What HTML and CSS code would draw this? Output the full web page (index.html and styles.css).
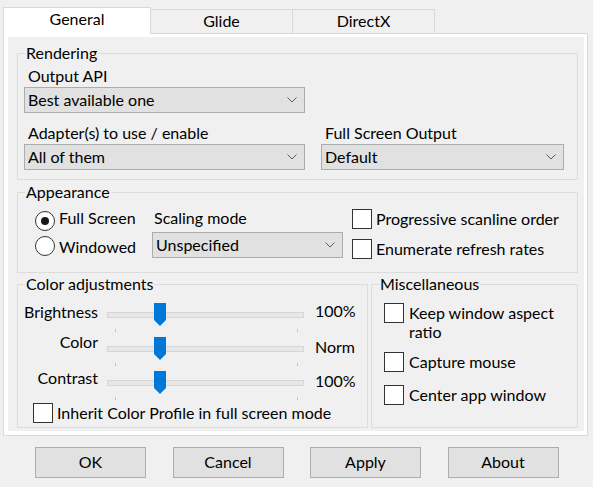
FILE: index.html
```html
<!DOCTYPE html>
<html>
<head>
<meta charset="utf-8">
<title>dgVoodoo Setup</title>
<link rel="stylesheet" href="styles.css">
</head>
<body>
<div class="tabs">
  <div class="tab tab-active">General</div>
  <div class="tab">Glide</div>
  <div class="tab">DirectX</div>
</div>
<div class="panel">
  <div class="page">
    <fieldset class="group group-rendering">
      <legend>Rendering</legend>
      <div class="label">Output API</div>
      <div class="combo combo-api"><span>Best available one</span><svg class="chev" width="10" height="6" viewBox="0 0 10 6"><path d="M0.5 0.5 L5 5 L9.5 0.5" fill="none" stroke="#5c5c5c" stroke-width="1"/></svg></div>
      <div class="render-row">
        <div class="render-col render-col-left">
          <div class="label">Adapter(s) to use / enable</div>
          <div class="combo"><span>All of them</span><svg class="chev" width="10" height="6" viewBox="0 0 10 6"><path d="M0.5 0.5 L5 5 L9.5 0.5" fill="none" stroke="#5c5c5c" stroke-width="1"/></svg></div>
        </div>
        <div class="render-col render-col-right">
          <div class="label">Full Screen Output</div>
          <div class="combo"><span>Default</span><svg class="chev" width="10" height="6" viewBox="0 0 10 6"><path d="M0.5 0.5 L5 5 L9.5 0.5" fill="none" stroke="#5c5c5c" stroke-width="1"/></svg></div>
        </div>
      </div>
    </fieldset>

    <fieldset class="group group-appearance">
      <legend>Appearance</legend>
      <div class="appearance-body">
        <div class="radios">
          <div class="radio radio-a"><span class="radio-dot checked"></span><span>Full Screen</span></div>
          <div class="radio radio-b"><span class="radio-dot"></span><span>Windowed</span></div>
        </div>
        <div class="scaling">
          <div class="scaling-label">Scaling mode</div>
          <div class="combo combo-scaling"><span>Unspecified</span><svg class="chev" width="10" height="6" viewBox="0 0 10 6"><path d="M0.5 0.5 L5 5 L9.5 0.5" fill="none" stroke="#5c5c5c" stroke-width="1"/></svg></div>
        </div>
        <div class="checks">
          <div class="check"><span class="box"></span><span>Progressive scanline order</span></div>
          <div class="check check-second"><span class="box"></span><span>Enumerate refresh rates</span></div>
        </div>
      </div>
    </fieldset>

    <div class="bottom-row">
      <fieldset class="group group-color">
        <legend>Color adjustments</legend>
        <div class="slider-row">
          <div class="s-label s-label-1">Brightness</div>
          <div class="slider">
            <div class="track"></div>
            <svg class="thumb" style="left:47px" width="12" height="23" viewBox="0 0 12 23"><path d="M0 0 H12 V17 L6 23 L0 17 Z" fill="#0078d7"/></svg>
            <span class="tick tick-l"></span><span class="tick tick-r"></span>
          </div>
          <div class="s-value s-value-1">100%</div>
        </div>
        <div class="slider-row">
          <div class="s-label s-label-2">Color</div>
          <div class="slider">
            <div class="track"></div>
            <svg class="thumb" style="left:47px" width="12" height="23" viewBox="0 0 12 23"><path d="M0 0 H12 V17 L6 23 L0 17 Z" fill="#0078d7"/></svg>
            <span class="tick tick-l"></span><span class="tick tick-r"></span>
          </div>
          <div class="s-value s-value-2">Norm</div>
        </div>
        <div class="slider-row">
          <div class="s-label s-label-3">Contrast</div>
          <div class="slider">
            <div class="track"></div>
            <svg class="thumb" style="left:47px" width="12" height="23" viewBox="0 0 12 23"><path d="M0 0 H12 V17 L6 23 L0 17 Z" fill="#0078d7"/></svg>
            <span class="tick tick-l"></span><span class="tick tick-r"></span>
          </div>
          <div class="s-value s-value-3">100%</div>
        </div>
        <div class="check check-inherit"><span class="box"></span><span>Inherit Color Profile in full screen mode</span></div>
      </fieldset>

      <fieldset class="group group-misc">
        <legend>Miscellaneous</legend>
        <div class="check mcheck mcheck-1"><span class="box"></span><span class="mtext">Keep window aspect ratio</span></div>
        <div class="check mcheck mcheck-2"><span class="box"></span><span class="mtext">Capture mouse</span></div>
        <div class="check mcheck mcheck-3"><span class="box"></span><span class="mtext">Center app window</span></div>
      </fieldset>
    </div>
  </div>
</div>
<div class="buttons">
  <div class="btn">OK</div>
  <div class="btn">Cancel</div>
  <div class="btn">Apply</div>
  <div class="btn">About</div>
</div>
</body>
</html>
```

FILE: styles.css
```css
* { box-sizing: border-box; }
html, body { margin: 0; padding: 0; }
body {
  width: 593px;
  height: 487px;
  overflow: hidden;
  background: #f0f0f0;
  font-family: Lato, "Liberation Sans", sans-serif;
  font-size: 16px;
  line-height: 20px;
  color: #000;
}

/* tabs */
.tabs {
  display: flex;
  align-items: flex-end;
  height: 33px;
  padding: 7px 0 0 3px;
}
.tab {
  width: 142px;
  height: 24px;
  padding-top: 1px;
  text-align: center;
  background: #f0f0f0;
  border: 1px solid #d9d9d9;
  border-left: none;
  border-bottom: none;
}
.tab-active {
  position: relative;
  z-index: 1;
  width: 148px;
  height: 27px;
  margin-bottom: -1px;
  background: #fff;
  border-left: 1px solid #d9d9d9;
}

/* panel */
.panel {
  margin: 0 5px 0 3px;
  border: 1px solid #d9d9d9;
  background: #fff;
  padding: 3px 3px 4px 4px;
}
.page {
  height: 394px;
  background: #f0f0f0;
  padding: 6px 6px 3px 9px;
  display: flex;
  flex-direction: column;
}

/* group boxes */
.group {
  margin: 0;
  min-width: 0;
  border: 1px solid #dcdcdc;
  padding: 0;
}
.group legend {
  margin-left: 7px;
  padding: 0 1px;
  line-height: 20px;
}

/* rendering */
.group-rendering { padding: 3px 0 9px 0; }
.label { padding-left: 10px; }
.combo {
  display: flex;
  align-items: center;
  justify-content: space-between;
  height: 26px;
  margin-top: 1px;
  padding: 0 7px 0 3px;
  background: #e1e1e1;
  border: 1px solid #adadad;
}
.chev { flex: none; }
.combo-api { width: 281px; margin-left: 6px; }
.render-row {
  display: flex;
  gap: 16px;
  margin-top: 10px;
  margin-left: 6px;
}
.render-row .label { padding-left: 4px; }
.render-col-left { width: 281px; }
.render-col-right { width: 243px; }

/* appearance */
.group-appearance { margin-top: 2px; padding: 0 0 13px 0; }
.appearance-body {
  display: flex;
  margin-left: 17px;
  padding-top: 6px;
}
.radios { width: 117px; }
.radio {
  display: flex;
  align-items: flex-start;
  gap: 4px;
  height: 20px;
}
.radio-dot {
  flex: none;
  width: 20px;
  height: 20px;
  border: 1px solid #333;
  border-radius: 50%;
  background: #fff;
  display: flex;
  align-items: center;
  justify-content: center;
}
.radio-a .radio-dot { margin-top: 3px; }
.radio-b { margin-top: 9px; }
.radio-b .radio-dot { margin-top: -1px; }
.radio-dot.checked::after {
  content: "";
  width: 8px;
  height: 8px;
  border-radius: 50%;
  background: #1a1a1a;
}
.scaling { width: 191px; }
.scaling-label { padding-left: 2px; }
.combo-scaling { margin-top: 4px; }
.checks { margin-left: 9px; padding-top: 1px; }
.check {
  display: flex;
  align-items: flex-start;
  gap: 4px;
}
.box {
  flex: none;
  width: 20px;
  height: 20px;
  border: 1px solid #333;
  background: #fff;
}
.check-second { margin-top: 10px; }

/* bottom row */
.bottom-row {
  flex: 1;
  display: flex;
  gap: 3px;
  margin-top: 1px;
}
.group-color { width: 351px; padding: 9px 0 4px 0; }
.group-misc { flex: 1; padding: 9px 0 0 0; }

.slider-row {
  display: grid;
  grid-template-columns: 80px 197px auto;
  column-gap: 9px;
  height: 31px;
  margin-bottom: 3px;
}
.slider-row:nth-of-type(3) { margin-bottom: 0; }
.s-label { text-align: right; }
.s-label-1 { margin-top: -1px; }
.s-label-2 { margin-top: -5px; }
.s-label-3 { margin-top: -3px; }
.s-value { margin-left: 2px; }
.s-value-1 { margin-top: -2px; }
.s-value-2 { margin-top: 0; }
.s-value-3 { margin-top: 0; }
.slider { position: relative; height: 31px; }
.track {
  position: absolute;
  left: 0;
  right: 0;
  top: 9px;
  height: 6px;
  background: #e7e7e7;
  border: 1px solid #d6d6d6;
}
.thumb { position: absolute; top: 0; }
.tick {
  position: absolute;
  top: 26px;
  width: 1px;
  height: 3px;
  background: #c4c4c4;
}
.tick-l { left: 8px; }
.tick-r { left: 190px; }

.check-inherit { margin-left: 15px; margin-top: 1px; }

.mcheck { margin-left: 12px; gap: 5px; }
.mtext { max-width: 150px; line-height: 19px; }
.mcheck-2 { margin-top: 11px; }
.mcheck-3 { margin-top: 13px; }

/* buttons */
.buttons {
  display: flex;
  gap: 26.5px;
  margin-top: 11px;
  padding-left: 35px;
}
.btn {
  width: 111px;
  height: 31px;
  background: #e1e1e1;
  border: 1px solid #adadad;
  text-align: center;
  padding-top: 4px;
}
```
